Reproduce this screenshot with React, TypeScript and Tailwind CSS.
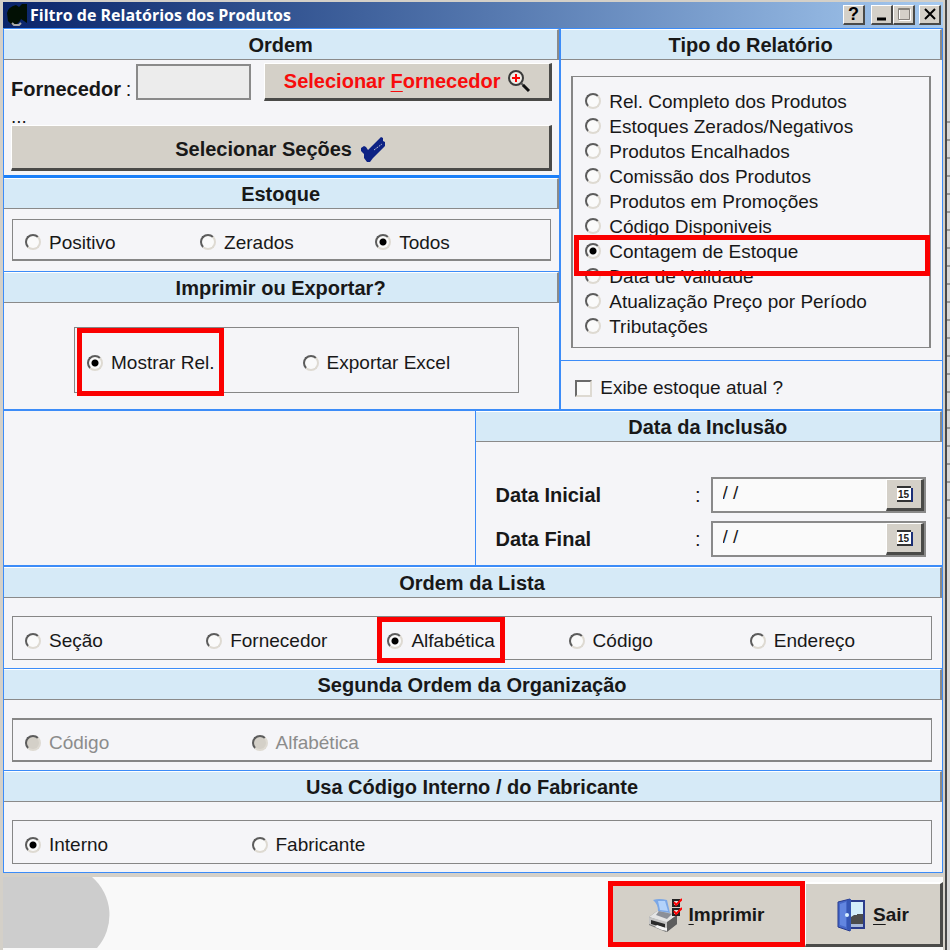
import { useState, type ReactNode } from "react";

type Option = { label: string; highlighted?: boolean };

const REPORT_TYPES: Option[] = [
  { label: "Rel. Completo dos Produtos" },
  { label: "Estoques Zerados/Negativos" },
  { label: "Produtos Encalhados" },
  { label: "Comissão dos Produtos" },
  { label: "Produtos em Promoções" },
  { label: "Código Disponiveis" },
  { label: "Contagem de Estoque", highlighted: true },
  { label: "Data de Validade" },
  { label: "Atualização Preço por Período" },
  { label: "Tributações" },
];

const BEVEL = "flex items-center justify-center border-t border-l border-t-white border-l-white bg-[#d4d0c8] font-bold";
const BUTTON = `${BEVEL} border-r-3 border-b-3 border-r-[#4a4a48] border-b-[#4a4a48]`;
const CAPTION_BUTTON = `${BEVEL} h-5 w-[22px] border-r-2 border-b-2 border-r-[#4a4a48] border-b-[#4a4a48] text-black`;

function SectionHeader({ children }: { children: ReactNode }) {
  return (
    <h2 className="h-[31px] border-t border-r-2 border-b border-t-white border-r-[#8a8a8a] border-b-[#8a8a8a] bg-[#d6eaf7] text-center text-[20px] leading-[30px] font-bold">
      {children}
    </h2>
  );
}

function RadioOption({
  name,
  option,
  checked,
  disabled,
  onSelect,
  vertical,
}: {
  name: string;
  option: Option;
  checked: boolean;
  disabled?: boolean;
  onSelect: () => void;
  vertical?: boolean;
}) {
  return (
    <label
      className={`relative flex items-center gap-2 whitespace-nowrap ${
        vertical ? "h-[25px]" : "justify-self-start pt-[6px]"
      } ${disabled ? "text-[#8c8c8c]" : ""}`}
    >
      <input
        type="radio"
        name={name}
        checked={checked}
        disabled={disabled}
        onChange={onSelect}
        className="mb-px size-4 shrink-0 appearance-none rounded-full border-2 border-t-[#5c5c5c] border-r-[#dedad2] border-b-[#dedad2] border-l-[#5c5c5c] bg-[#fafafa] checked:bg-[radial-gradient(circle,#000_3px,transparent_4px)] disabled:bg-[#d4d0c8]"
      />
      {option.label}
      {option.highlighted && (
        <span
          className={`pointer-events-none absolute z-10 border-[5px] border-[#fb0000] ${
            vertical ? "-top-1 -right-px -bottom-3 -left-[11px]" : "top-0 -right-[10px] -bottom-1 -left-[10px]"
          }`}
        />
      )}
    </label>
  );
}

function RadioGroup({
  name,
  options,
  initial,
  disabled,
  vertical,
  className,
}: {
  name: string;
  options: Option[];
  initial?: string;
  disabled?: boolean;
  vertical?: boolean;
  className: string;
}) {
  const [selected, setSelected] = useState(initial);

  return (
    <fieldset className={`grid border-[#868686] pl-3 ${className}`}>
      {options.map((option) => (
        <RadioOption
          key={option.label}
          name={name}
          option={option}
          checked={selected === option.label}
          disabled={disabled}
          onSelect={() => setSelected(option.label)}
          vertical={vertical}
        />
      ))}
    </fieldset>
  );
}

function DateField({ id, label }: { id: string; label: string }) {
  return (
    <div className="flex items-center">
      <label htmlFor={id} className="flex w-[215px] justify-between pr-[10px] text-[20px] font-bold">
        {label}
        <span className="font-normal">:</span>
      </label>
      <div className="flex h-9 flex-1 border-2 border-[#8a8a8a] bg-[#fafafa]">
        <input id={id} defaultValue="/ /" className="w-0 flex-1 bg-transparent pb-1 pl-[10px]" />
        <button type="button" aria-label={`Calendário: ${label}`} className={`${BUTTON} w-[38px]`}>
          <CalendarIcon />
        </button>
      </div>
    </div>
  );
}

function CalendarIcon() {
  return (
    <svg width="17" height="17" viewBox="0 0 17 17">
      <path d="M3 2h14v14H3z" fill="#1b2f78" />
      <path d="M1 1h14v14H1z" fill="#fff" />
      <path d="M1 1h14" stroke="#333" strokeWidth="2" />
      <path d="M1 15h14" stroke="#333" strokeWidth="2" />
      <text x="2" y="12" fontSize="10" fontWeight="700" fontFamily="Liberation Sans, sans-serif" fill="#222">
        15
      </text>
    </svg>
  );
}

function MagnifierIcon() {
  return (
    <svg width="24" height="24" viewBox="0 0 24 24" fill="none">
      <circle cx="9" cy="9" r="7" fill="#efece6" stroke="#3a3a3a" strokeWidth="2" />
      <path d="M9 5v8M5 9h8" stroke="#f00" strokeWidth="2" />
      <path d="M14 14l3 3" stroke="#555" strokeWidth="2" />
      <path d="M16 16l6 6" stroke="#111" strokeWidth="3" />
    </svg>
  );
}

function CheckIcon() {
  return (
    <svg width="26" height="26" viewBox="0 0 26 26">
      <path d="M1 12l3-2 2 1 2 3L21 1l2 1v3l2 1v4L13 22l-3 4H7l-3-4v-4l-3-3z" fill="#0d2284" />
      <path d="M14 14l8-6" stroke="#b9bed2" strokeDasharray="2 1" />
    </svg>
  );
}

function PrinterIcon() {
  return (
    <svg width="34" height="34" viewBox="0 0 34 34">
      <path d="M1 19l8-6 20 4v9l-11 8L1 27z" fill="#777" />
      <path d="M1 19l8-6 20 4-10 8z" fill="#e4e4e4" />
      <path d="M1 19l18 5v9L1 26z" fill="#c4c4c4" />
      <path d="M3 22l14 4v4L3 26z" fill="#2a2a2a" />
      <path d="M9 27l9 3 3-1-1 4-6-1-7-3z" fill="#f4f4f4" />
      <path d="M19 24l10-7v9l-10 8z" fill="#5d5d5d" />
      <path d="M8 17l3-4 13 3-5 5z" fill="#8b8f98" />
      <path d="M5 2q6-2 14 0l3 13-12-2Q10 6 5 2z" fill="#7ba7e6" />
      <path d="M10 3h7l3 10-8-1z" fill="#b3d2fa" />
      <path d="M25 2h6v6h-6zM25 11h6v6h-6z" fill="#ddd" stroke="#222" strokeWidth="2" />
      <path d="M26 4l2 3 6-6M26 13l2 3 6-6" stroke="#f00" strokeWidth="2" fill="none" />
    </svg>
  );
}

function DoorIcon() {
  return (
    <svg width="28" height="34" viewBox="0 0 28 34">
      <path d="M10 3h17v27H10z" fill="#d3edfa" stroke="#2b3c8c" strokeWidth="2" />
      <path d="M14 19l3-2h3v-1h6v10H14z" fill="#4c4c4c" />
      <path d="M14 26h12v3H14z" fill="#a9b9d8" />
      <path d="M1 4l12-3v32L1 29z" fill="#4668c8" stroke="#263a8e" />
      <path d="M3 6l6-2v25l-6-2z" fill="#6286e0" />
      <path d="M10 2l4-1v32l-4-2z" fill="#3556b4" />
      <circle cx="10" cy="17" r="2" fill="#d9f0ff" />
    </svg>
  );
}

function TitleBar() {
  return (
    <header className="mt-[2px] flex h-[26px] items-center bg-linear-to-r from-[#0a246a] to-[#a6caf0] pr-[2px] pb-px">
      <svg width="24" height="24" viewBox="0 0 24 24">
        <path d="M4 10q1-6 9-8l3 2 3-3h5v19l-6-4-1 2-4 4H9l-4-4z" fill="#021004" />
        <path d="M9 20l2 2h5l2-2" stroke="#aaa" strokeWidth="2" fill="none" />
      </svg>
      <h1 className="flex-1 pl-[3px] font-['Open_Sans','Noto_Sans',sans-serif] text-[16px] leading-6 font-bold text-white">
        Filtro de Relatórios dos Produtos
      </h1>
      <button type="button" aria-label="Ajuda" className={`${CAPTION_BUTTON} text-[18px] leading-none`}>
        ?
      </button>
      <button type="button" aria-label="Minimizar" className={`${CAPTION_BUTTON} ml-[6px]`}>
        <svg width="16" height="14" viewBox="0 0 16 14">
          <path d="M3 12h9" stroke="#000" strokeWidth="3" />
        </svg>
      </button>
      <button type="button" aria-label="Maximizar" className={CAPTION_BUTTON}>
        <svg width="16" height="14" viewBox="0 0 16 14" fill="none">
          <path d="M3.5 2.5h11v11h-11z" stroke="#fff" />
          <path d="M2.5 1.5h11v11h-11zM2 2.5h12" stroke="#86827c" />
        </svg>
      </button>
      <button type="button" aria-label="Fechar" className={`${CAPTION_BUTTON} ml-1`}>
        <svg width="14" height="14" viewBox="0 0 14 14">
          <path d="M2 2l10 10M12 2L2 12" stroke="#000" strokeWidth="2" />
        </svg>
      </button>
    </header>
  );
}

export default function App() {
  const [showStock, setShowStock] = useState(false);

  return (
    <div className="flex min-h-screen bg-[#d4d0c8] pl-[3px] font-['Liberation_Sans',Arial,sans-serif] text-[19px] leading-6 text-[#181818]">
      <div className="flex min-w-0 flex-1 flex-col">
        <TitleBar />

        <main className="border border-[#3c8cf8] bg-[#f5f5f8]">
          <div className="flex">
            <div className="flex flex-[557] flex-col">
              <section className="border-b-3 border-[#1c80f8]">
                <SectionHeader>Ordem</SectionHeader>
                <div className="flex flex-col px-[7px] pt-[3px] pb-1">
                  <div className="flex items-center">
                    <label
                      htmlFor="fornecedor"
                      className="flex flex-1 justify-between pt-[14px] text-[20px] font-bold whitespace-nowrap"
                    >
                      Fornecedor
                      <span className="pr-[5px] font-normal">:</span>
                    </label>
                    <input id="fornecedor" className="h-9 w-[115px] border-2 border-[#8a8a8a] bg-[#ececec] px-2" />
                    <button
                      type="button"
                      className={`${BUTTON} ml-[13px] h-[38px] w-[288px] gap-[6px] text-[20px] text-[#f80c0c]`}
                    >
                      <span>
                        Selecionar <u className="decoration-1 underline-offset-3">F</u>ornecedor
                      </span>
                      <MagnifierIcon />
                    </button>
                  </div>
                  <p className="h-6 leading-8">...</p>
                  <button type="button" className={`${BUTTON} h-[46px] gap-2 border-t-[#8a8a8a] pt-1 text-[20px]`}>
                    Selecionar Seções
                    <CheckIcon />
                  </button>
                </div>
              </section>

              <section className="border-b border-[#3c8cf8]">
                <SectionHeader>Estoque</SectionHeader>
                <RadioGroup
                  name="estoque"
                  options={[{ label: "Positivo" }, { label: "Zerados" }, { label: "Todos" }]}
                  initial="Todos"
                  className="mx-2 my-[10px] h-[42px] grid-cols-3 border border-b-2"
                />
              </section>

              <section>
                <SectionHeader>Imprimir ou Exportar?</SectionHeader>
                <RadioGroup
                  name="saida"
                  options={[{ label: "Mostrar Rel.", highlighted: true }, { label: "Exportar Excel" }]}
                  initial="Mostrar Rel."
                  className="mt-6 mr-10 mb-4 ml-[70px] h-[66px] grid-cols-2 border"
                />
              </section>
            </div>

            <div className="flex flex-[382] flex-col border-l-2 border-[#3c8cf8]">
              <section className="border-b border-[#3c8cf8]">
                <SectionHeader>Tipo do Relatório</SectionHeader>
                <RadioGroup
                  name="tipo"
                  options={REPORT_TYPES}
                  initial="Contagem de Estoque"
                  vertical
                  className="mt-4 mr-[11px] mb-3 ml-[10px] border border-r-2 border-l-2 pt-3 pb-2"
                />
              </section>
              <label className="flex flex-1 items-center gap-2 pt-[6px] pl-[14px]">
                <input
                  type="checkbox"
                  checked={showStock}
                  onChange={(e) => setShowStock(e.target.checked)}
                  className="size-[17px] appearance-none border-2 border-t-[#6a6a6a] border-r-[#dedad2] border-b-[#dedad2] border-l-[#6a6a6a] bg-[#fafafa] checked:bg-[#333]"
                />
                Exibe estoque atual ?
              </label>
            </div>
          </div>

          <div className="flex border-t-2 border-[#3c8cf8]">
            <div className="flex-[471]" />
            <section className="flex-[467] border-l border-[#3c8cf8]">
              <SectionHeader>Data da Inclusão</SectionHeader>
              <div className="flex flex-col gap-2 pt-[35px] pr-4 pb-2 pl-5">
                <DateField id="data-inicial" label="Data Inicial" />
                <DateField id="data-final" label="Data Final" />
              </div>
            </section>
          </div>

          <section className="border-t-2 border-[#3c8cf8]">
            <SectionHeader>Ordem da Lista</SectionHeader>
            <RadioGroup
              name="ordem-lista"
              options={[
                { label: "Seção" },
                { label: "Fornecedor" },
                { label: "Alfabética", highlighted: true },
                { label: "Código" },
                { label: "Endereço" },
              ]}
              initial="Alfabética"
              className="mt-[18px] mr-[10px] mb-2 ml-2 h-[44px] grid-cols-5 border"
            />
          </section>

          <section className="border-t border-[#3c8cf8]">
            <SectionHeader>Segunda Ordem da Organização</SectionHeader>
            <RadioGroup
              name="segunda-ordem"
              options={[{ label: "Código" }, { label: "Alfabética" }]}
              disabled
              className="mt-[18px] mr-[10px] mb-2 ml-2 h-[44px] grid-cols-4 border border-t-2 border-b-2"
            />
          </section>

          <section className="border-t border-[#3c8cf8]">
            <SectionHeader>Usa Código Interno / do Fabricante</SectionHeader>
            <RadioGroup
              name="codigo"
              options={[{ label: "Interno" }, { label: "Fabricante" }]}
              initial="Interno"
              className="mt-[18px] mr-[10px] mb-2 ml-2 h-[44px] grid-cols-4 border"
            />
          </section>
        </main>

        <footer className="mt-1 flex flex-1 justify-end bg-[#f9f9f9]">
          <svg width="107" height="71" viewBox="0 0 107 71" className="mr-auto">
            <path d="M0 0h89A50 50 0 0 1 94 71H0z" fill="#cdcdcd" />
          </svg>
          <button
            type="button"
            className="mt-1 flex h-[66px] w-[197px] items-center justify-center gap-[6px] border-[5px] border-[#fb0000] bg-[#d4d0c8] pt-[2px] font-bold"
          >
            <PrinterIcon />
            <span>
              <u className="decoration-1 underline-offset-3">I</u>mprimir
            </span>
          </button>
          <button type="button" className={`${BUTTON} mt-[5px] h-[65px] w-[138px] gap-2 border-t-2 border-t-[#8a8a8a] pt-px`}>
            <DoorIcon />
            <span>
              <u className="decoration-1 underline-offset-3">S</u>air
            </span>
          </button>
        </footer>
      </div>

      <div className="w-[7px] border-l-2 border-[#d4d0c8]">
        <div className="flex h-full flex-col border-l-2 border-[#484848] bg-[#d8d8d8]">
          <div className="h-[105px]" />
          <div className="h-[430px] bg-[repeating-linear-gradient(#d8d8d8_0px,#d8d8d8_16px,#555_17px,#d8d8d8_18px)]" />
        </div>
      </div>
    </div>
  );
}
